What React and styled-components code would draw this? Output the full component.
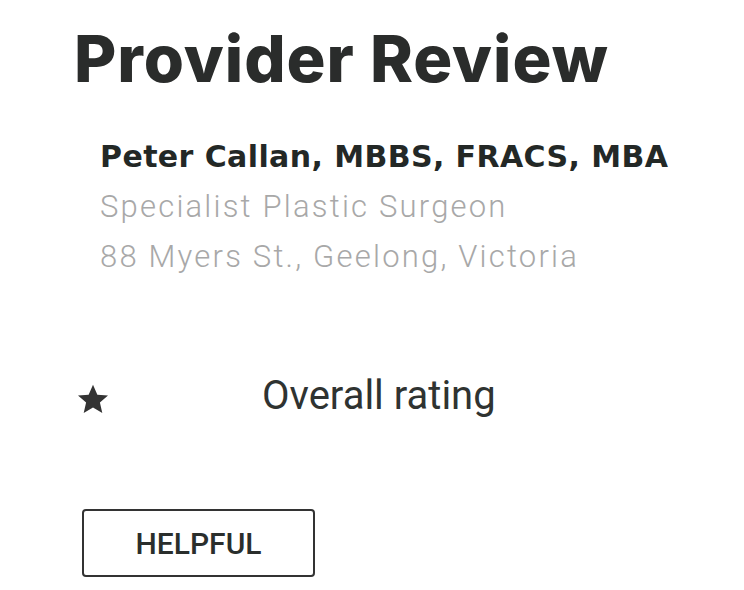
import React from "react";
import styled, { createGlobalStyle } from "styled-components";

const GlobalStyle = createGlobalStyle`
  html, body { margin: 0; padding: 0; background: #ffffff; }
  body { font-family: Roboto, "Liberation Sans", sans-serif; }
`;

const Page = styled.main`
  display: flex;
  flex-direction: column;
  padding: 19px 0 0 74px;
  width: 744px;
  height: 590px;
  box-sizing: border-box;
`;

const Title = styled.h1`
  margin: 0;
  font-family: Inter, "Liberation Sans", sans-serif;
  font-weight: 800;
  font-size: 65px;
  line-height: 80px;
  color: #2a2c2b;
  letter-spacing: 0.95px;
`;

const Details = styled.section`
  display: flex;
  flex-direction: column;
  margin-top: 33px;
  padding-left: 26px;
`;

const Name = styled.div`
  font-family: "DejaVu Sans", Inter, sans-serif;
  font-weight: 700;
  font-size: 30px;
  line-height: 50px;
  color: #232826;
  letter-spacing: 0.4px;
`;

const Info = styled.div`
  font-family: Roboto, "Liberation Sans", sans-serif;
  font-weight: 300;
  font-size: 31px;
  line-height: 50px;
  color: #a8a8a8;
  letter-spacing: 2.2px;
`;

const RatingRow = styled.div`
  display: flex;
  align-items: center;
  margin-top: 90px;
  padding-left: 1px;
`;

const StarIcon = styled.svg`
  width: 36px;
  height: 36px;
  flex: none;
  margin-top: 5px;
`;

const RatingLabel = styled.span`
  margin-left: 151px;
  font-family: Roboto, "Liberation Sans", sans-serif;
  font-weight: 400;
  font-size: 40px;
  line-height: 48px;
  color: #2f3331;
`;

const HelpfulButton = styled.button`
  margin-top: 89px;
  margin-left: 8px;
  width: 233px;
  height: 68px;
  box-sizing: border-box;
  border: 2px solid #333;
  border-radius: 4px;
  background: #fff;
  font-family: Roboto, "Liberation Sans", sans-serif;
  font-weight: 500;
  font-size: 30px;
  color: #2a2e2c;
  align-self: flex-start;
  cursor: pointer;
`;

export default function App() {
  return (
    <>
      <GlobalStyle />
      <Page>
        <Title>Provider Review</Title>
        <Details>
          <Name>Peter Callan, MBBS, FRACS, MBA</Name>
          <Info>Specialist Plastic Surgeon</Info>
          <Info>88 Myers St., Geelong, Victoria</Info>
        </Details>
        <RatingRow>
          <StarIcon viewBox="0 0 24 24" aria-hidden="true">
            <path
              fill="#333"
              d="M12 2.5l2.9 6.6 7.1.6-5.4 4.7 1.6 7-6.2-3.7-6.2 3.7 1.6-7L2 9.7l7.1-.6z"
            />
          </StarIcon>
          <RatingLabel>Overall rating</RatingLabel>
        </RatingRow>
        <HelpfulButton>HELPFUL</HelpfulButton>
      </Page>
    </>
  );
}
